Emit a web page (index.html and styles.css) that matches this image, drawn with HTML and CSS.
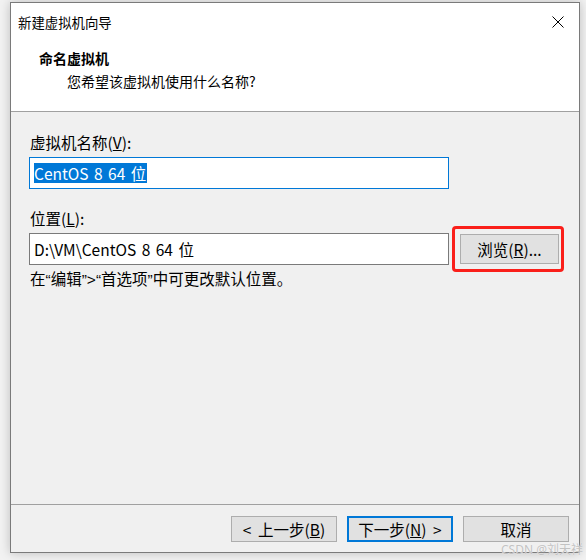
FILE: index.html
```html
<!DOCTYPE html>
<html lang="zh-CN">
<head>
<meta charset="utf-8">
<title>新建虚拟机向导</title>
<link rel="stylesheet" href="styles.css">
</head>
<body>
<div class="window">
  <div class="header">
    <div class="titlebar">
      <span class="title">新建虚拟机向导</span>
      <svg class="close" width="12" height="12" viewBox="0 0 12 12"><path d="M0.5 0.5 L11.5 11.5 M11.5 0.5 L0.5 11.5" stroke="#000" stroke-width="1" fill="none"/></svg>
    </div>
    <div class="heading">命名虚拟机</div>
    <div class="subheading">您希望该虚拟机使用什么名称?</div>
  </div>
  <div class="content">
    <div class="label">虚拟机名称(<u>V</u>):</div>
    <div class="field focused"><span class="sel">CentOS 8 64 位</span></div>
    <div class="label second">位置(<u>L</u>):</div>
    <div class="row">
      <div class="field">D:\VM\CentOS 8 64 位</div>
      <div class="btn browse">浏览(<u>R</u>)...</div>
    </div>
    <div class="hint">在“编辑”&gt;“首选项”中可更改默认位置。</div>
  </div>
  <div class="footer">
    <div class="btn">&lt; 上一步(<u>B</u>)</div>
    <div class="btn default">下一步(<u>N</u>) &gt;</div>
    <div class="btn">取消</div>
    <div class="watermark">CSDN @刘天祥</div>
  </div>
</div>
</body>
</html>
```

FILE: styles.css
```css
* { box-sizing: border-box; }
html, body { margin: 0; padding: 0; }
body {
  width: 586px;
  height: 560px;
  background: #f2f2f2;
  font-family: "Noto Sans CJK SC", "Noto Sans", sans-serif;
  color: #000;
  padding: 2px 0 0 10px;
  overflow: hidden;
}
.window {
  width: 570px;
  height: 551px;
  border: 1px solid #7a7a7a;
  background: #f0f0f0;
  display: flex;
  flex-direction: column;
  box-shadow: 0 0 10px rgba(0,0,0,0.22);
  position: relative;
}
.header {
  background: #fff;
  height: 109px;
  border-bottom: 1px solid #a0a0a0;
  flex: none;
}
.titlebar {
  height: 37px;
  display: flex;
  align-items: center;
  justify-content: space-between;
  padding: 0 15px 0 7px;
}
.title {
  font-size: 13.4px;
  line-height: 18px;
}
.close { display: block; }
.heading {
  margin-top: 9px;
  padding-left: 28px;
  font-size: 14px;
  font-weight: bold;
  line-height: 18px;
}
.subheading {
  margin-top: 5px;
  padding-left: 56px;
  font-size: 14px;
  line-height: 18px;
}
.content {
  flex: 1;
  padding: 20px 0 0 18px;
  display: flex;
  flex-direction: column;
  align-items: flex-start;
}
.label {
  font-size: 15.5px;
  line-height: 20px;
  padding-left: 1px;
}
.label.second { margin-top: 19px; }
.field {
  margin-top: 5px;
  width: 420px;
  height: 32px;
  border: 1px solid #7a7a7a;
  background: #fff;
  font-size: 15.5px;
  line-height: 20px;
  padding: 5px 4px;
  white-space: nowrap;
  word-spacing: 2px;
}
.field.focused { border-color: #0078d7; }
.sel {
  background: #0078d7;
  color: #fff;
  display: inline-block;
  padding-right: 1px;
}
.row {
  display: flex;
  align-items: center;
  gap: 11px;
  margin-top: 5px;
}
.row .field { margin-top: 0; }
.btn {
  height: 26px;
  border: 1px solid #adadad;
  background: #e1e1e1;
  font-size: 15.5px;
  line-height: 22px;
  display: flex;
  align-items: center;
  justify-content: center;
  white-space: pre;
  word-spacing: 3px;
}
.browse {
  width: 99px;
  height: 30px;
  position: relative;
}
.browse::after {
  content: "";
  position: absolute;
  left: -9px;
  top: -9px;
  right: -6px;
  bottom: -9px;
  border: 3px solid #fa1f1a;
  border-radius: 4px;
}
.hint {
  margin-top: 5px;
  font-family: "Liberation Sans", "Noto Sans CJK SC", sans-serif;
  font-size: 15.5px;
  line-height: 20px;
  padding-left: 1px;
}
.footer {
  flex: none;
  border-top: 1px solid #a0a0a0;
  padding: 11px 10px 10px 0;
  display: flex;
  justify-content: flex-end;
  gap: 10px;
  position: relative;
}
.footer .btn { width: 106px; }
.footer .btn.default { border: 2px solid #0078d7; }
.watermark {
  position: absolute;
  right: -4px;
  bottom: -5px;
  font-family: "Noto Sans", "Noto Sans CJK SC", sans-serif;
  font-size: 12px;
  line-height: 14px;
  color: #c2c2c2;
  text-shadow: 0 0 1px #fff;
  white-space: nowrap;
}
```
